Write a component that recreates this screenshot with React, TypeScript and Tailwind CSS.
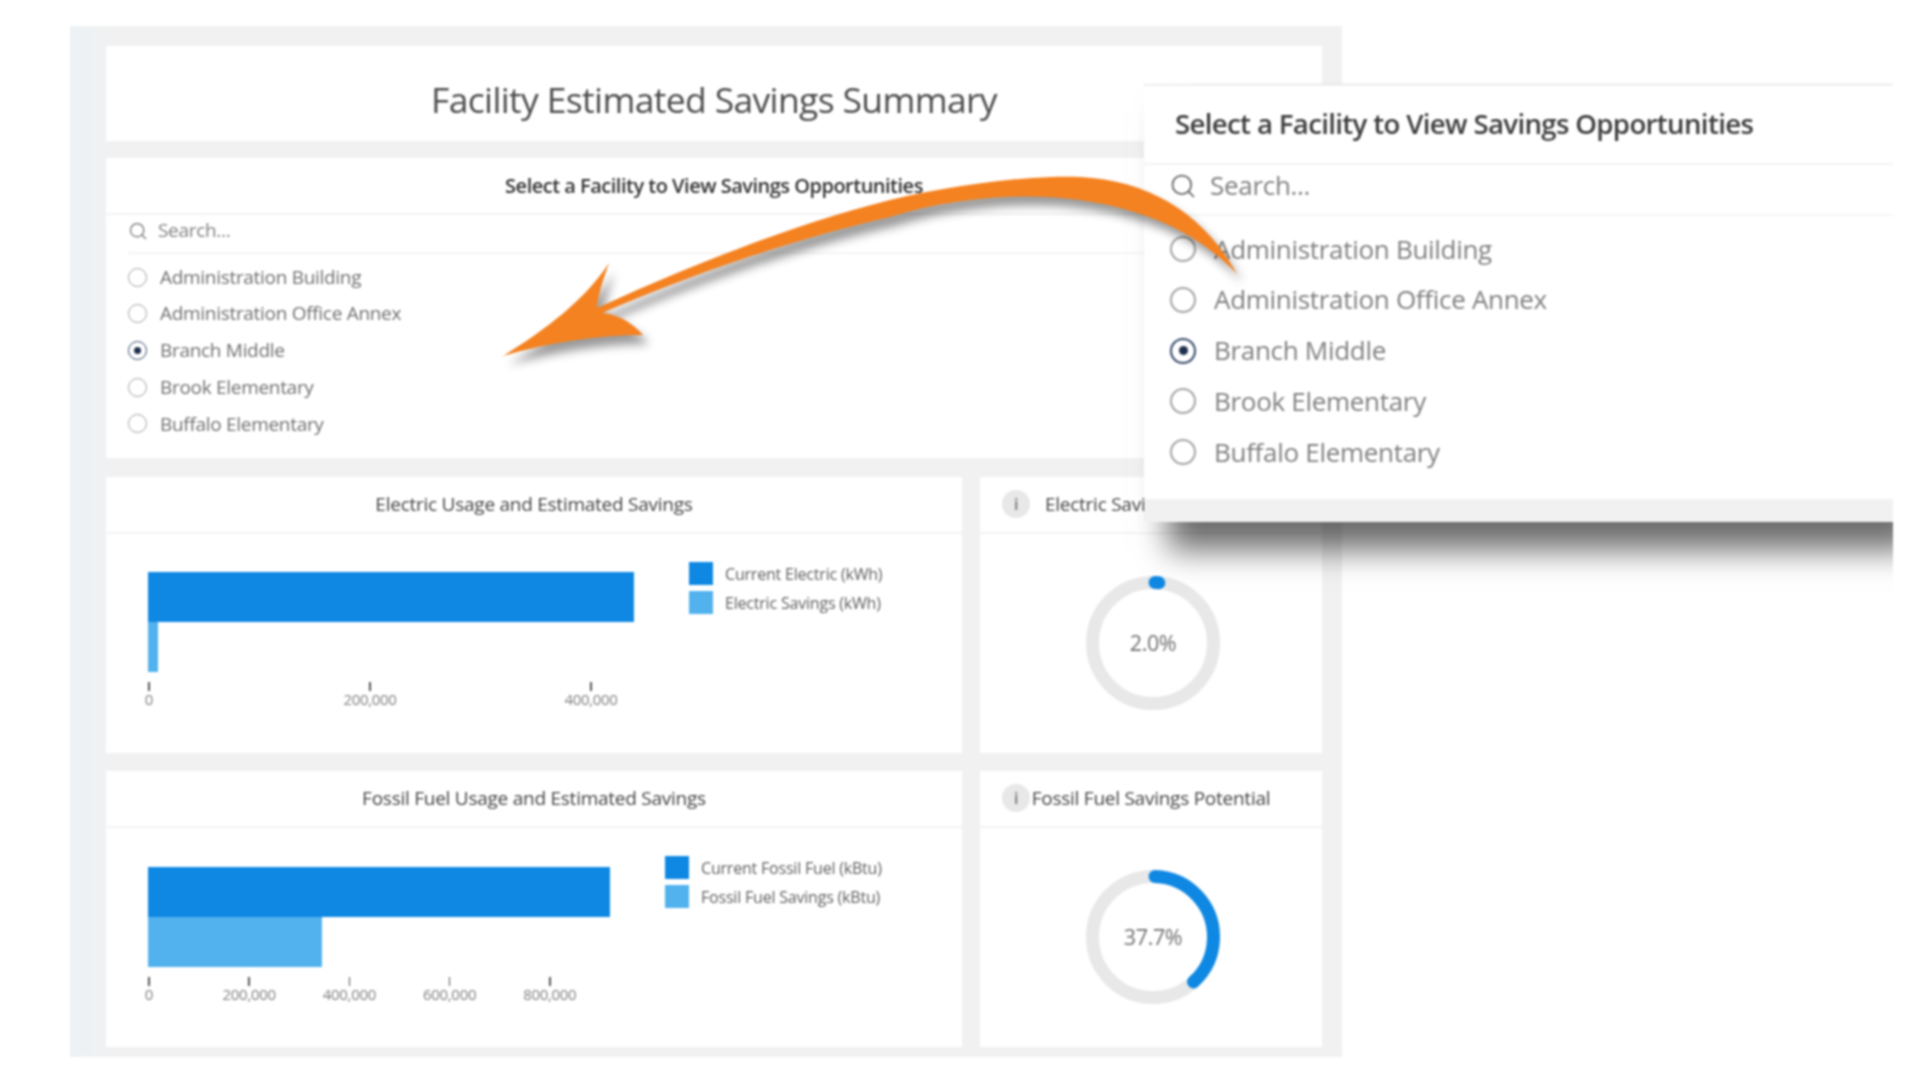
import { Search } from 'lucide-react';

const facilities = ['Administration Building', 'Administration Office Annex', 'Branch Middle', 'Brook Elementary', 'Buffalo Elementary'];

function Radio({ checked, big }: { checked: boolean; big?: boolean }) {
  if (big) {
    return (
      <span className={`flex h-[26px] w-[26px] shrink-0 items-center justify-center rounded-full border-2 ${checked ? 'border-[#34486a]' : 'border-[#a3a3a3]'}`}>
        {checked && <span className="h-[9px] w-[9px] rounded-full bg-[#1f2f4d]" />}
      </span>
    );
  }
  return (
    <span className={`flex h-[19px] w-[19px] shrink-0 items-center justify-center rounded-full border-[1.5px] ${checked ? 'border-[#34486a]' : 'border-[#a3a3a3]'}`}>
      {checked && <span className="h-[7px] w-[7px] rounded-full bg-[#1f2f4d]" />}
    </span>
  );
}

function CardHeader({ title, info }: { title: string; info?: boolean }) {
  return (
    <div className="relative flex h-[57px] shrink-0 items-center justify-center border-b-2 border-[#f3f3f3] pb-[1px] text-[19px] tracking-[-0.25px] text-[#444]">
      {info && (
        <span className="absolute left-[22px] top-[13px] flex h-[28px] w-[28px] items-center justify-center rounded-full bg-[#e8e8e8] text-[16px] font-semibold text-[#777]">i</span>
      )}
      {title}
    </div>
  );
}

function BarChart({ title, width, current, savings, ticks, step, legend, barTop }: {
  title: string;
  width: number;
  current: number;
  savings: number;
  ticks: string[];
  step: number;
  legend: string[];
  barTop: string;
}) {
  return (
    <div className="flex h-[276px] flex-col bg-white">
      <CardHeader title={title} />
      <div className="flex pl-[42px]">
        <div className={`shrink-0 ${barTop}`} style={{ width }}>
          <div className="h-[50px] bg-[#0f88e3]" style={{ width: current }} />
          <div className="h-[50px] bg-[#52b2ee]" style={{ width: savings }} />
          <div className="mt-[10px] flex" style={{ marginLeft: -step / 2 + 1 }}>
            {ticks.map((t) => (
              <div key={t} className="flex shrink-0 flex-col items-center" style={{ width: step }}>
                <span className="h-[9px] w-[1.5px] bg-[#555]" />
                <span className="text-[15px] leading-[17px] tracking-[-0.3px] text-[#808080]">{t}</span>
              </div>
            ))}
          </div>
        </div>
        <div className="flex flex-col gap-[6px] pt-[28px]">
          {legend.map((l, i) => (
            <div key={l} className="flex h-[23px] items-center gap-[12px] text-[16px] tracking-[-0.2px] text-[#5f5f5f]">
              <span className={`h-[23px] w-[24px] ${i === 0 ? 'bg-[#0f88e3]' : 'bg-[#52b2ee]'}`} />
              {l}
            </div>
          ))}
        </div>
      </div>
    </div>
  );
}

function Donut({ title, pct, label }: { title: string; pct: number; label: string }) {
  const r = 60.5;
  const len = 2 * Math.PI * r;
  return (
    <div className="flex h-[276px] flex-col bg-white">
      <CardHeader title={title} info />
      <div className="flex justify-center pl-[4px] pt-[42px]">
        <div className="grid h-[134px] w-[134px] place-items-center">
          <svg width="134" height="134" viewBox="0 0 134 134" className="[grid-area:1/1]">
            <circle cx="67" cy="67" r={r} fill="none" stroke="#e8e8e8" strokeWidth="13" />
            <circle
              cx="67"
              cy="67"
              r={r}
              fill="none"
              stroke="#0f88e3"
              strokeWidth="13"
              strokeLinecap="round"
              strokeDasharray={`${(len * pct) / 100} ${len}`}
              transform="rotate(-88 67 67)"
            />
          </svg>
          <span className="text-[21.5px] tracking-[-0.4px] text-[#707070] [grid-area:1/1]">{label}</span>
        </div>
      </div>
    </div>
  );
}

export default function App() {
  return (
    <div className="relative h-[1068px] w-[1920px] overflow-hidden bg-white font-['Open_Sans',sans-serif] blur-[1px]">
      <div className="ml-[70px] mt-[26px] inline-flex h-[1031px] w-[1272px] flex-col bg-gradient-to-r from-[#ecf2f6] to-[#f1f1f1] to-[3%] pl-[36px] pr-[20px] pt-[20px] align-top">
        <div className="flex h-[95px] items-center justify-center bg-white pt-[12px] text-[35.5px] tracking-[-0.65px] text-[#4d4d4d]">
          Facility Estimated Savings Summary
        </div>

        <div className="mt-[17px] h-[300px] bg-white">
          <div className="flex h-[57px] items-center justify-center border-b-2 border-[#f3f3f3] text-[20px] font-semibold tracking-[-0.5px] text-[#333]">
            Select a Facility to View Savings Opportunities
          </div>
          <div className="mx-[22px] flex h-[39px] items-center gap-[10px] border-b-2 border-[#f5f5f5] pb-[6px] text-[19px] tracking-[-0.3px] text-[#808080]">
            <Search size={20} strokeWidth={1.5} className="text-[#707070]" />
            Search...
          </div>
          <div className="flex flex-col gap-[18.7px] pl-[22px] pt-[14px]">
            {facilities.map((f) => (
              <div key={f} className="flex h-[18px] items-center gap-[13px] text-[19px] tracking-[-0.3px] text-[#707070]">
                <Radio checked={f === 'Branch Middle'} />
                {f}
              </div>
            ))}
          </div>
        </div>

        <div className="mt-[19px] grid grid-cols-[856px_342px] gap-x-[18px] gap-y-[18px]">
          <BarChart
            title="Electric Usage and Estimated Savings"
            width={541}
            current={486}
            savings={10}
            ticks={['0', '200,000', '400,000']}
            step={221}
            legend={['Current Electric (kWh)', 'Electric Savings (kWh)']}
            barTop="pt-[38px]"
          />
          <Donut title="Electric Savings Potential" pct={1} label="2.0%" />
          <BarChart
            title="Fossil Fuel Usage and Estimated Savings"
            width={517}
            current={462}
            savings={174}
            ticks={['0', '200,000', '400,000', '600,000', '800,000']}
            step={100.2}
            legend={['Current Fossil Fuel (kBtu)', 'Fossil Fuel Savings (kBtu)']}
            barTop="pt-[39px]"
          />
          <Donut title="Fossil Fuel Savings Potential" pct={37.7} label="37.7%" />
        </div>
      </div>

      {/* zoomed-in callout */}
      <div className="absolute left-[1144px] top-[84px] h-[438px] w-[749px] border-t-2 border-[#efefef] bg-white shadow-[24px_28px_30px_rgba(0,0,0,0.58)] [clip-path:inset(-2px_0_-70px_-30px)]">
        <div className="flex h-[79px] items-center border-b-2 border-[#f3f3f3] pb-[2px] pl-[31px] text-[27.6px] font-semibold tracking-[-0.65px] text-[#3d3d3d]">
          Select a Facility to View Savings Opportunities
        </div>
        <div className="flex h-[51px] items-center gap-[13px] border-b-2 border-[#f5f5f5] pb-[8px] pl-[25px] text-[26px] tracking-[-0.3px] text-[#808080]">
          <Search size={28} strokeWidth={1.5} className="text-[#666]" />
          Search...
        </div>
        <div className="flex flex-col gap-[24.8px] pl-[26px] pt-[20px]">
          {facilities.map((f) => (
            <div key={f} className="flex h-[26px] items-center gap-[18px] text-[26px] tracking-[-0.3px] text-[#808080]">
              <Radio checked={f === 'Branch Middle'} big />
              {f}
            </div>
          ))}
        </div>
        <div className="absolute bottom-0 left-0 h-[23px] w-full bg-[#f1f1f1]" />
      </div>

      {/* orange arrow */}
      <svg className="absolute left-0 top-0 drop-shadow-[6px_9px_5px_rgba(0,0,0,0.4)]" width="1920" height="1068" viewBox="0 0 1920 1068">
        <path
          d="M503 356 C545 330 585 300 609 263 C603 280 598 295 597 308 C680 270 790 225 890 200 C960 183 1040 175 1080 177 C1150 180 1205 215 1237 274 C1200 235 1150 210 1080 200 C1020 192 950 198 890 217 C790 240 690 275 602 313 C615 314 630 320 643 335 C600 335 550 342 503 356 Z"
          fill="#f58220"
        />
      </svg>
    </div>
  );
}
